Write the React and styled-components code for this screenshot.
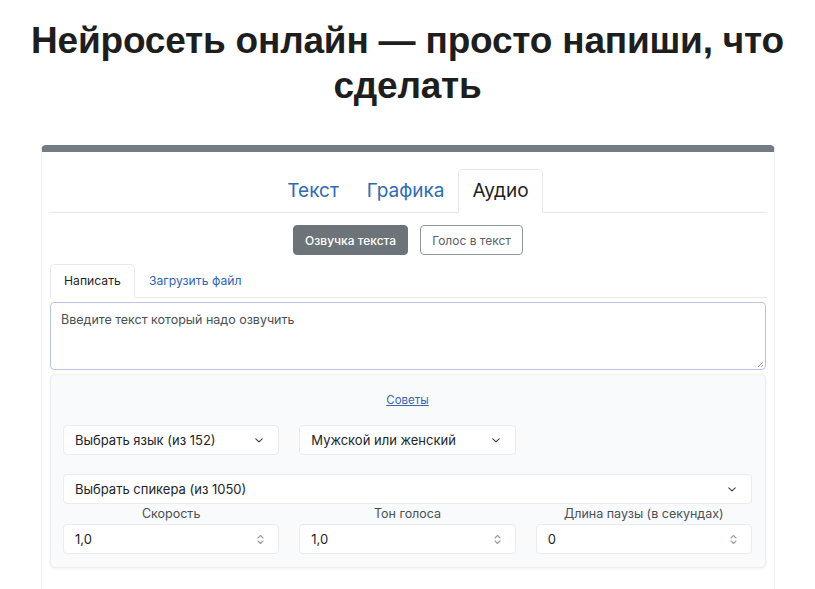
import React from "react";
import styled, { createGlobalStyle } from "styled-components";

const Global = createGlobalStyle`
  html, body { margin: 0; padding: 0; background: #fff; }
  body { font-family: Inter, "Noto Sans", sans-serif; color: #212529; }
  * { box-sizing: border-box; }
`;

const Page = styled.div`
  width: 815px;
  padding-top: 18px;
`;

const Title = styled.h1`
  margin: 0 0 37px;
  text-align: center;
  font-family: "Liberation Sans", Arial, sans-serif;
  font-weight: 700;
  font-size: 37px;
  line-height: 45px;
  letter-spacing: -0.2px;
  color: #1e1e1e;
  padding: 0 10px;
`;

const Card = styled.div`
  margin: 0 40px 0 41px;
  border: 1px solid #f1f2f4;
  border-top: 7px solid #737b83;
  border-radius: 5px 5px 0 0;
  padding: 17px 7px 40px;
  background: #fff;
`;

const Tabs = styled.div`
  display: flex;
  justify-content: center;
  border-bottom: 1px solid #e6e8eb;
`;

const Tab = styled.div`
  font-size: 19px;
  line-height: 24px;
  padding: 9px 13px;
  margin-bottom: -1px;
  border: 1px solid ${(p) => (p.$active ? "#e6e8eb" : "transparent")};
  border-bottom-color: ${(p) => (p.$active ? "#fff" : "transparent")};
  border-radius: 5px 5px 0 0;
  background: ${(p) => (p.$active ? "#fff" : "transparent")};
  color: ${(p) => (p.$active ? "#1f1f1f" : "#2f6ab3")};
  font-weight: 400;
`;

const ButtonRow = styled.div`
  display: flex;
  justify-content: center;
  gap: 12px;
  margin-top: 12px;
`;

const Btn = styled.div`
  height: 30px;
  display: flex;
  align-items: center;
  padding: 0 11px;
  font-size: 12px;
  border-radius: 4px;
  border: 1px solid ${(p) => (p.$primary ? "#6c7379" : "#8f959a")};
  background: ${(p) => (p.$primary ? "#6c7379" : "#fff")};
  color: ${(p) => (p.$primary ? "#fff" : "#5b6167")};
  font-weight: ${(p) => (p.$primary ? 500 : 400)};
`;

const SubTabs = styled.div`
  display: flex;
  margin: 9px 0 0 1px;
  border-bottom: 1px solid #e6e8eb;
`;

const SubTab = styled.div`
  font-size: 12.2px;
  line-height: 16px;
  padding: 8px 13px;
  margin-bottom: -1px;
  border: 1px solid ${(p) => (p.$active ? "#e6e8eb" : "transparent")};
  border-bottom-color: ${(p) => (p.$active ? "#fff" : "transparent")};
  border-radius: 5px 5px 0 0;
  color: ${(p) => (p.$active ? "#1f1f1f" : "#2f63b4")};
  background: ${(p) => (p.$active ? "#fff" : "transparent")};
`;

const TextAreaBox = styled.div`
  position: relative;
  margin: 4px 1px 0 1px;
  height: 68px;
  border: 1px solid #b7c6e4;
  border-radius: 4px;
  padding: 9px 10px;
  font-size: 12.5px;
  color: #4a4f55;
`;

const Grip = styled.svg`
  position: absolute;
  right: 1px;
  bottom: 1px;
`;

const Panel = styled.div`
  margin: 4px 1px 0 1px;
  background: #f9fafc;
  border: 1px solid #eceef2;
  border-radius: 5px;
  box-shadow: 0 1px 3px rgba(0, 0, 0, 0.06);
  padding: 17px 13px 13px 12px;
`;

const TipsLink = styled.div`
  text-align: center;
  font-size: 11.5px;
  color: #3a63b1;
  text-decoration: underline;
  line-height: 16px;
`;

const Grid = styled.div`
  display: grid;
  grid-template-columns: repeat(3, 1fr);
  column-gap: 20px;
  margin-top: ${(p) => p.$mt || 0}px;
`;

const Field = styled.div`
  height: 30px;
  grid-column: ${(p) => (p.$full ? "1 / -1" : "auto")};
  display: flex;
  align-items: center;
  justify-content: space-between;
  background: #fff;
  border: 1px solid #eaecef;
  border-radius: 4px;
  padding: 0 14px 0 11px;
  font-size: 13px;
  color: #212529;
`;

const Label = styled.div`
  text-align: center;
  font-size: 12.5px;
  line-height: 16px;
  color: #4a4f55;
  margin: 2px 0 2px;
`;

const Col = styled.div`
  display: flex;
  flex-direction: column;
`;

const Chevron = () => (
  <svg width="10" height="7" viewBox="0 0 10 7">
    <path d="M1.8 1.8 L5 4.8 L8.2 1.8" fill="none" stroke="#3a3d40" strokeWidth="1.1" strokeLinecap="round" strokeLinejoin="round" />
  </svg>
);

const Spinner = () => (
  <svg width="7" height="11" viewBox="0 0 7 11">
    <path d="M1 4 L3.5 1.5 L6 4 M1 7 L3.5 9.5 L6 7" fill="none" stroke="#9a9ea3" strokeWidth="1.1" strokeLinecap="round" strokeLinejoin="round" />
  </svg>
);

const inputs = [
  { label: "Скорость", value: "1,0" },
  { label: "Тон голоса", value: "1,0" },
  { label: "Длина паузы (в секундах)", value: "0" },
];

export default function App() {
  return (
    <Page>
      <Global />
      <Title>Нейросеть онлайн — просто напиши, что сделать</Title>
      <Card>
        <Tabs>
          <Tab>Текст</Tab>
          <Tab>Графика</Tab>
          <Tab $active>Аудио</Tab>
        </Tabs>
        <ButtonRow>
          <Btn $primary>Озвучка текста</Btn>
          <Btn>Голос в текст</Btn>
        </ButtonRow>
        <SubTabs>
          <SubTab $active>Написать</SubTab>
          <SubTab>Загрузить файл</SubTab>
        </SubTabs>
        <TextAreaBox>
          Введите текст который надо озвучить
          <Grip width="8" height="8" viewBox="0 0 8 8">
            <path d="M7 2 L2 7 M7 5 L5 7" stroke="#9aa0a6" strokeWidth="0.9" />
          </Grip>
        </TextAreaBox>
        <Panel>
          <TipsLink>Советы</TipsLink>
          <Grid $mt={17}>
            <Field>Выбрать язык (из 152)<Chevron /></Field>
            <Field>Мужской или женский<Chevron /></Field>
          </Grid>
          <Grid $mt={19}>
            <Field $full>Выбрать спикера (из 1050)<Chevron /></Field>
          </Grid>
          <Grid>
            {inputs.map((it) => (
              <Col key={it.label}>
                <Label>{it.label}</Label>
                <Field>{it.value}<Spinner /></Field>
              </Col>
            ))}
          </Grid>
        </Panel>
      </Card>
    </Page>
  );
}
